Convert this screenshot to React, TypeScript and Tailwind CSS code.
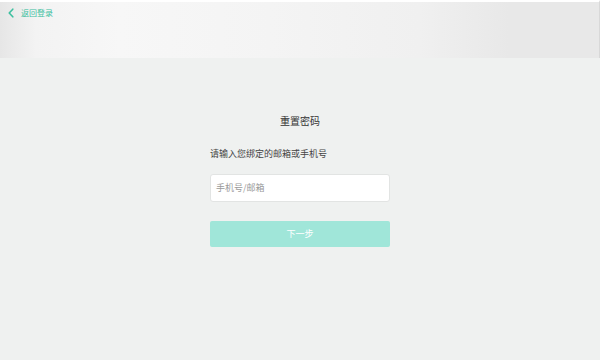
import React from "react";

export default function App() {
  const font = { fontFamily: '"Noto Sans CJK SC", "Noto Sans", sans-serif' };
  return (
    <div className="w-[600px] h-[360px] bg-[#eff1f0] flex flex-col overflow-hidden" style={font}>
      <div className="h-[58px] border-t-2 border-white bg-[linear-gradient(90deg,#e6e6e6_0%,#f3f3f3_6%,#f7f7f7_20%,#f4f4f4_45%,#f0f0f0_70%,#e8e8e8_85%,#e8e8e8_100%)] border-r border-r-[#d8d8d8] flex items-start">
        <div className="flex items-center gap-[7px] pl-[8px] pt-[5px]">
          <svg width="6" height="10" viewBox="0 0 6 10" fill="none">
            <path d="M4.8 1.2L1.2 5L4.8 8.8" stroke="#3cbf9f" strokeWidth="1.6" strokeLinecap="round" strokeLinejoin="round" />
          </svg>
          <span className="text-[8px] leading-[12px] text-[#3cbf9f]">返回登录</span>
        </div>
      </div>
      <div className="flex flex-col items-center">
        <div className="w-[180px] flex flex-col">
          <div className="mt-[56px] text-center text-[10px] leading-[14px] text-[#333]">重置密码</div>
          <div className="mt-[20px] text-[9px] leading-[12px] text-[#444]">请输入您绑定的邮箱或手机号</div>
          <div className="mt-[14px] h-[28px] bg-white border border-[#e2e4e3] rounded-[3px] flex items-center px-[5px]">
            <span className="text-[9px] text-[#9a9a9a]">手机号/邮箱</span>
          </div>
          <div className="mt-[19px] h-[26px] bg-[#a0e6d9] rounded-[2px] flex items-center justify-center">
            <span className="text-[9px] text-white">下一步</span>
          </div>
        </div>
      </div>
    </div>
  );
}
